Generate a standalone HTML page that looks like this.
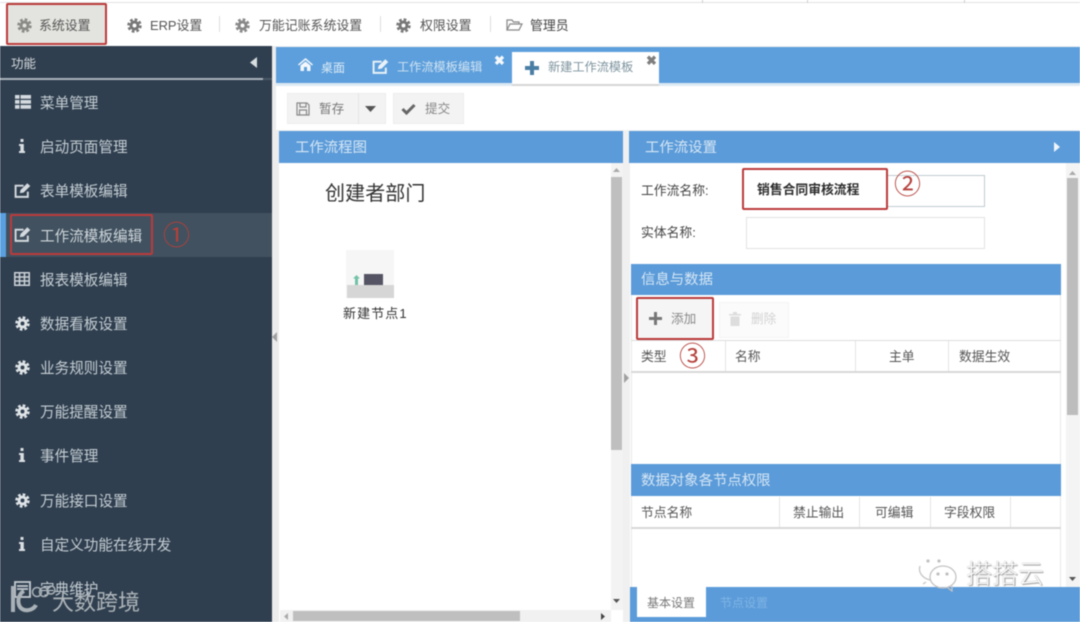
<!DOCTYPE html>
<html lang="zh"><head><meta charset="utf-8"><title>工作流设置</title>
<style>
html,body{margin:0;padding:0;background:#fff}
#p{position:relative;width:1080px;height:622px;overflow:hidden;background:#f1f1f1;font-family:"Liberation Sans","Noto Sans CJK SC",sans-serif;filter:blur(.6px)}
#p div,#p span.t,#p svg{position:absolute}
.t{position:absolute;white-space:nowrap;line-height:20px;height:20px;margin-top:1px}
.b{background:#5b9bd9}
.s{color:#c5ced4;font-size:14.6px;left:40px;margin-top:1.5px}
.ti{color:#d5e6f5;font-size:14.4px}
.d{color:#555;font-size:13px}
.line{background:#ddd}
.r{border:2px solid #bb3a3a;box-sizing:border-box;border-radius:2px}
.c{color:#b5403a;font-size:27px;line-height:30px;height:30px}
</style></head><body><div id="p">
<svg width="0" height="0" style="left:0;top:0"><defs>
<symbol id="g" viewBox="0 0 16 16"><circle cx="8" cy="8" r="3.7" fill="none" stroke="currentColor" stroke-width="3.2"/><circle cx="8" cy="8" r="6.4" fill="none" stroke="currentColor" stroke-width="2.6" stroke-dasharray="2.9 2.12"/></symbol>
<symbol id="e" viewBox="0 0 16 16"><path d="M13 9v5H1.500V3.500H9" fill="none" stroke="currentColor" stroke-width="1.800"/><path d="M5.500 10.500l.6-3L12.500 1.200l2.800 2.600L9 10z" fill="currentColor"/></symbol>
<symbol id="i" viewBox="0 0 8 16"><path d="M2.500 1h3v3h-3zM1 6h4.800v7H7v2H1v-2h1.400V8H1z" fill="currentColor"/></symbol>
</defs></svg>

<!-- top bar -->
<div style="left:0;top:0;width:1080px;height:46px;background:#fff"></div>
<div style="left:0;top:2px;width:1080px;height:1px;background:#e2e2e2"></div>
<div style="left:702px;top:0;width:1px;height:3px;background:#ccc"></div>
<div style="left:807px;top:0;width:1px;height:3px;background:#ccc"></div>
<div style="left:964px;top:0;width:1px;height:3px;background:#ccc"></div>
<div style="left:6px;top:3px;width:101px;height:42px;background:#e3e3df" class="r"></div>
<svg style="left:17px;top:18px;color:#8a8a86" width="15" height="15"><use href="#g"/></svg>
<span class="t d" style="left:39px;top:15px;font-size:12.900px;color:#555">系统设置</span>
<svg style="left:127px;top:18px;color:#777" width="15" height="15"><use href="#g"/></svg>
<span class="t d" style="left:150px;top:15px;font-size:12.900px">ERP设置</span>
<div class="line" style="left:219px;top:16px;width:1px;height:16px"></div>
<svg style="left:235px;top:18px;color:#888" width="15" height="15"><use href="#g"/></svg>
<span class="t d" style="left:259px;top:15px;font-size:12.900px">万能记账系统设置</span>
<div class="line" style="left:380px;top:16px;width:1px;height:16px"></div>
<svg style="left:396px;top:18px;color:#777" width="15" height="15"><use href="#g"/></svg>
<span class="t d" style="left:420px;top:15px;font-size:12.900px">权限设置</span>
<div class="line" style="left:490px;top:16px;width:1px;height:16px"></div>
<svg style="left:506px;top:18px" width="17" height="14" viewBox="0 0 17 14"><path d="M1 12V2h5l1.500 2H13v2M1 12l3-6h12l-3 6z" fill="none" stroke="#888" stroke-width="1.200"/></svg>
<span class="t d" style="left:530px;top:15px;font-size:12.900px;color:#444">管理员</span>

<!-- sidebar -->
<div style="left:0;top:46px;width:272px;height:576px;background:#303f4f"></div>
<div style="left:0;top:78px;width:263px;height:2px;background:#a9b2ba"></div>
<div style="left:263px;top:78px;width:9px;height:2px;background:#4a5866"></div>
<span class="t" style="left:11px;top:53px;color:#d5dade;font-size:12.500px">功能</span>
<svg style="left:250px;top:57px" width="8" height="12"><path d="M7 0v11L0 5.500z" fill="#d8dde0"/></svg>
<div style="left:0;top:213px;width:272px;height:44px;background:#41515f"></div>
<div style="left:0;top:213px;width:6px;height:44px;background:#5a9fdf"></div>

<svg style="left:15px;top:95px" width="16" height="14" viewBox="0 0 16 14"><path d="M0 0h4.500v3.800H0zM5.500 0H16v3.800H5.500zM0 5h4.500v3.800H0zM5.500 5H16v3.800H5.500zM0 10h4.500v3.800H0zM5.500 10H16v3.800H5.500z" fill="#d4dadf"/></svg>
<span class="t s" style="top:92px">菜单管理</span>
<svg style="left:18px;top:138px;color:#d9dee2" width="8" height="16"><use href="#i"/></svg>
<span class="t s" style="top:136px">启动页面管理</span>
<svg style="left:14px;top:182px;color:#d4dadf" width="17" height="17"><use href="#e"/></svg>
<span class="t s" style="top:180px">表单模板编辑</span>
<svg style="left:14px;top:226px;color:#d4dadf" width="17" height="17"><use href="#e"/></svg>
<span class="t s" style="top:225px;color:#cfd6db">工作流模板编辑</span>
<svg style="left:14px;top:272px" width="16" height="14" viewBox="0 0 16 14"><path d="M.8.800h14.400v12.400H.8zM.8 5h14.400M.8 9h14.400M5.500.800v12.400M10.500.800v12.400" fill="none" stroke="#ccd3d8" stroke-width="1.500"/></svg>
<span class="t s" style="top:269px">报表模板编辑</span>
<svg style="left:15px;top:316px;color:#dfe4e7" width="15" height="15"><use href="#g"/></svg>
<span class="t s" style="top:313px">数据看板设置</span>
<svg style="left:15px;top:360px;color:#dfe4e7" width="15" height="15"><use href="#g"/></svg>
<span class="t s" style="top:357px">业务规则设置</span>
<svg style="left:15px;top:404px;color:#dfe4e7" width="15" height="15"><use href="#g"/></svg>
<span class="t s" style="top:401px">万能提醒设置</span>
<svg style="left:18px;top:447px;color:#d9dee2" width="8" height="16"><use href="#i"/></svg>
<span class="t s" style="top:445px">事件管理</span>
<svg style="left:15px;top:493px;color:#dfe4e7" width="15" height="15"><use href="#g"/></svg>
<span class="t s" style="top:490px">万能接口设置</span>
<svg style="left:18px;top:536px;color:#d9dee2" width="8" height="16"><use href="#i"/></svg>
<span class="t s" style="top:534px">自定义功能在线开发</span>
<svg style="left:14px;top:581px" width="17" height="17" viewBox="0 0 17 17"><path d="M1 1h15v15H1zM3 5h11M3 8h11" fill="none" stroke="#c5ccd2" stroke-width="1.800"/></svg>
<span class="t s" style="top:578px">字典维护</span>

<div class="r" style="left:10px;top:214px;width:143px;height:41px;background:transparent"></div>
<span class="t c" style="left:163px;top:220px">①</span>

<!-- splitter -->
<div style="left:272px;top:46px;width:7px;height:576px;background:#ececec"></div>
<svg style="left:272px;top:331px" width="6" height="12"><path d="M5 1v10L0 6z" fill="#a0a0a0"/></svg>

<!-- tabs -->
<div style="left:276px;top:47px;width:804px;height:36px;background:#5d9fdc"></div>
<div style="left:276px;top:83px;width:804px;height:3px;background:#dce9f3"></div>
<svg style="left:298px;top:58px" width="15" height="13" viewBox="0 0 15 13"><path d="M7.500 0L15 6.500l-1 1-6.500-5.500L1 7.500l-1-1zM2.500 7.500L7.500 3.500l5 4V13H9V9H6v4H2.500z" fill="#f2f7fb"/></svg>
<span class="t" style="left:321px;top:57px;font-size:12px;color:#dbeaf6">桌面</span>
<svg style="left:372px;top:58px;color:#eaf2f8" width="17" height="17"><use href="#e"/></svg>
<span class="t" style="left:397px;top:56px;font-size:12.200px;color:#cfe2f2">工作流模板编辑</span>
<span class="t" style="left:494px;top:50px;font-size:13px;color:#f5f9fc;font-weight:bold">✖</span>
<div style="left:512px;top:52px;width:147px;height:32px;background:#fff"></div>
<div style="left:512px;top:84px;width:147px;height:2px;background:#d6d6d6"></div>
<svg style="left:525px;top:61px" width="14" height="14"><path d="M5 0h4v5h5v4H9v5H5V9H0V5h5z" fill="#4a7ea5"/></svg>
<span class="t" style="left:548px;top:56px;font-size:12.200px;color:#7d949f">新建工作流模板</span>
<span class="t" style="left:646px;top:50px;font-size:13px;color:#7e7e7e;font-weight:bold">✖</span>

<!-- toolbar -->
<div style="left:276px;top:86px;width:804px;height:44px;background:#fff"></div>
<div style="left:287px;top:93px;width:99px;height:31px;background:#f3f3f3;border:1px solid #ececec;box-sizing:border-box"></div>
<div style="left:358px;top:93px;width:1px;height:31px;background:#e5e5e5"></div>
<svg style="left:296px;top:102px" width="14" height="14" viewBox="0 0 14 14"><path d="M1 1h10l2 2v10H1zM4 1v4h6V1M3.500 13V8h7v5" fill="none" stroke="#888" stroke-width="1.200"/></svg>
<span class="t" style="left:319px;top:98px;font-size:12.600px;color:#777">暂存</span>
<svg style="left:365px;top:106px" width="11" height="6"><path d="M0 0h11L5.500 6z" fill="#555"/></svg>
<div style="left:393px;top:93px;width:71px;height:31px;background:#f3f3f3;border:1px solid #ececec;box-sizing:border-box"></div>
<svg style="left:401px;top:103px" width="15" height="12"><path d="M1.500 6l4 4 8-8" fill="none" stroke="#666" stroke-width="3"/></svg>
<span class="t" style="left:425px;top:98px;font-size:12.600px;color:#888">提交</span>

<!-- left panel -->
<div style="left:279px;top:162px;width:344px;height:460px;background:#fff"></div>
<div class="b" style="left:279px;top:131px;width:344px;height:32px"></div>
<span class="t ti" style="left:295px;top:137px">工作流程图</span>
<div style="left:611px;top:163px;width:12px;height:447px;background:#f3f3f3"></div>
<div style="left:611px;top:177px;width:11px;height:273px;background:#bfbfbf"></div>
<svg style="left:613px;top:168px" width="7" height="4"><path d="M0 4h7L3.500 0z" fill="#aaa"/></svg>
<svg style="left:613px;top:599px" width="7" height="4"><path d="M0 0h7L3.500 4z" fill="#555"/></svg>
<div style="left:280px;top:610px;width:331px;height:12px;background:#f1f1f1"></div>
<div style="left:293px;top:611px;width:227px;height:10px;background:#bfbfbf"></div>
<svg style="left:284px;top:613px" width="4" height="7"><path d="M4 0v7L0 3.500z" fill="#aaa"/></svg>
<svg style="left:601px;top:613px" width="4" height="7"><path d="M0 0v7l4-3.500z" fill="#444"/></svg>

<span class="t" style="left:325px;top:183px;font-size:20px;letter-spacing:.1px;color:#333">创建者部门</span>
<div style="left:346px;top:250px;width:48px;height:48px;background:#f6f6f6"></div>
<div style="left:347px;top:285px;width:47px;height:13px;background:#d6d6d6"></div>
<div style="left:364px;top:274px;width:19px;height:11px;background:#545464"></div>
<svg style="left:353px;top:275px" width="7" height="10"><path d="M3.500 0L7 3.500H5V10H2V3.500H0z" fill="#72c2a8"/></svg>
<span class="t" style="left:343px;top:303px;font-size:13px;letter-spacing:1.100px;color:#333">新建节点1</span>

<!-- middle splitter -->
<div style="left:623px;top:131px;width:7px;height:491px;background:#f0f0f0"></div>
<svg style="left:624px;top:372px" width="6" height="12"><path d="M0 1v10l5-5z" fill="#a0a0a0"/></svg>

<!-- right panel -->
<div style="left:630px;top:162px;width:450px;height:425px;background:#fff"></div>
<div class="b" style="left:629px;top:131px;width:451px;height:32px"></div>
<span class="t ti" style="left:645px;top:137px">工作流设置</span>
<svg style="left:1054px;top:142px" width="6" height="10"><path d="M0 0v10l6-5z" fill="#eef5fb"/></svg>

<span class="t d" style="left:641px;top:180px;font-size:12.800px;color:#444">工作流名称:</span>
<div style="left:746px;top:175px;width:239px;height:32px;border:1px solid #bfcbd2;box-sizing:border-box;background:#fff"></div>
<div class="r" style="left:742px;top:168px;width:146px;height:42px;background:#fff"></div>
<span class="t" style="left:757px;top:179px;font-size:12.800px;font-weight:bold;color:#2c2c2c">销售合同审核流程</span>
<span class="t c" style="left:894px;top:169px">②</span>
<span class="t d" style="left:641px;top:222px;font-size:12.800px;color:#444">实体名称:</span>
<div style="left:746px;top:217px;width:239px;height:32px;border:1px solid #e2e2e2;box-sizing:border-box;background:#fff"></div>

<div class="b" style="left:631px;top:264px;width:430px;height:31px"></div>
<span class="t ti" style="left:641px;top:269px">信息与数据</span>
<div style="left:631px;top:295px;width:1px;height:292px;background:#e8e8e8"></div>
<div style="left:1060px;top:295px;width:1px;height:292px;background:#e8e8e8"></div>

<div style="left:637px;top:298px;width:75px;height:40px;background:#f5f5f5"></div>
<div class="r" style="left:636px;top:297px;width:78px;height:43px;background:transparent"></div>
<svg style="left:649px;top:312px" width="13" height="13"><path d="M5 0h3v5h5v3H8v5H5V8H0V5h5z" fill="#777"/></svg>
<span class="t" style="left:671px;top:308px;font-size:12.600px;color:#888">添加</span>
<div style="left:719px;top:302px;width:70px;height:36px;background:#fbfbfb;border:1px solid #f3f3f3;box-sizing:border-box"></div>
<svg style="left:729px;top:312px" width="12" height="14" viewBox="0 0 12 14"><path d="M0 2h12v1.500H0zM4 0h4v2H4zM1.500 4.500h9V14h-9z" fill="#ddd"/></svg>
<span class="t" style="left:751px;top:308px;font-size:12.600px;color:#d2d2d2">删除</span>

<div style="left:631px;top:340px;width:430px;height:1px;background:#ddd"></div>
<div style="left:631px;top:371px;width:430px;height:2px;background:#d8d8d8"></div>
<div style="left:725px;top:341px;width:1px;height:30px;background:#e4e4e4"></div>
<div style="left:855px;top:341px;width:1px;height:30px;background:#e4e4e4"></div>
<div style="left:948px;top:341px;width:1px;height:30px;background:#e4e4e4"></div>
<span class="t d" style="left:641px;top:346px;font-size:12.800px">类型</span>
<span class="t c" style="left:679px;top:341px">③</span>
<span class="t d" style="left:735px;top:346px;font-size:12.800px">名称</span>
<span class="t d" style="left:889px;top:346px;font-size:12.800px">主单</span>
<span class="t d" style="left:959px;top:346px;font-size:12.800px">数据生效</span>

<div class="b" style="left:631px;top:464px;width:430px;height:32px"></div>
<span class="t ti" style="left:641px;top:470px">数据对象各节点权限</span>
<div style="left:631px;top:527px;width:430px;height:2px;background:#d8d8d8"></div>
<div style="left:779px;top:497px;width:1px;height:30px;background:#e4e4e4"></div>
<div style="left:859px;top:497px;width:1px;height:30px;background:#e4e4e4"></div>
<div style="left:930px;top:497px;width:1px;height:30px;background:#e4e4e4"></div>
<div style="left:1010px;top:497px;width:1px;height:30px;background:#e4e4e4"></div>
<span class="t d" style="left:641px;top:502px;font-size:12.800px">节点名称</span>
<span class="t d" style="left:793px;top:502px;font-size:12.800px">禁止输出</span>
<span class="t d" style="left:875px;top:502px;font-size:12.800px">可编辑</span>
<span class="t d" style="left:944px;top:502px;font-size:12.800px">字段权限</span>

<div style="left:1066px;top:163px;width:14px;height:424px;background:#f4f4f4"></div>
<div style="left:1067px;top:178px;width:11px;height:237px;background:#bdbdbd"></div>
<svg style="left:1069px;top:171px" width="7" height="4"><path d="M0 4h7L3.500 0z" fill="#aaa"/></svg>
<svg style="left:1069px;top:577px" width="7" height="4"><path d="M0 0h7L3.500 4z" fill="#555"/></svg>

<!-- bottom bar -->
<div class="b" style="left:630px;top:587px;width:450px;height:35px"></div>
<div style="left:637px;top:587px;width:69px;height:30px;background:#fff"></div>
<span class="t" style="left:647px;top:592px;font-size:12px;color:#777">基本设置</span>
<span class="t" style="left:720px;top:592px;font-size:12px;color:#80b4e5">节点设置</span>

<!-- watermarks -->
<svg style="left:8px;top:580px" width="48" height="36" viewBox="0 0 48 36" fill="none" stroke="#aab2b8"><path d="M5 6v26" stroke-width="4"/><path d="M28 25c-3 6-14 8-17 0-2-6 1-12 5-14" stroke-width="4"/><circle cx="29" cy="12" r="4.500" stroke-width="1.500"/><circle cx="36" cy="12" r="4.500" stroke-width="1.500"/><circle cx="43" cy="10" r="4" stroke-width="1.500"/></svg>
<span class="t" style="left:52px;top:589px;font-size:22px;line-height:26px;height:26px;color:#aeb5ba">大数跨境</span>
<svg style="left:916px;top:558px" width="48" height="34" viewBox="0 0 48 34" fill="none" stroke="#c4c4c4" stroke-width="1.300"><path d="M14 22C6 20 2 14 4 8"/><path d="M10 24l-3 2"/><ellipse cx="27" cy="19" rx="13" ry="11"/><path d="M32 30l4 3v-5"/><circle cx="12" cy="3" r="1" fill="#aaa"/><circle cx="23" cy="3" r="1" fill="#aaa"/><circle cx="22" cy="16" r="1" fill="#999"/><circle cx="31" cy="16" r="1" fill="#999"/></svg>
<span class="t" style="left:966px;top:559px;font-size:26px;line-height:28px;height:28px;color:#fff;font-weight:300;text-shadow:0 0 1px #777,1px 1px 1px #999">搭搭云</span>
</div></body></html>
